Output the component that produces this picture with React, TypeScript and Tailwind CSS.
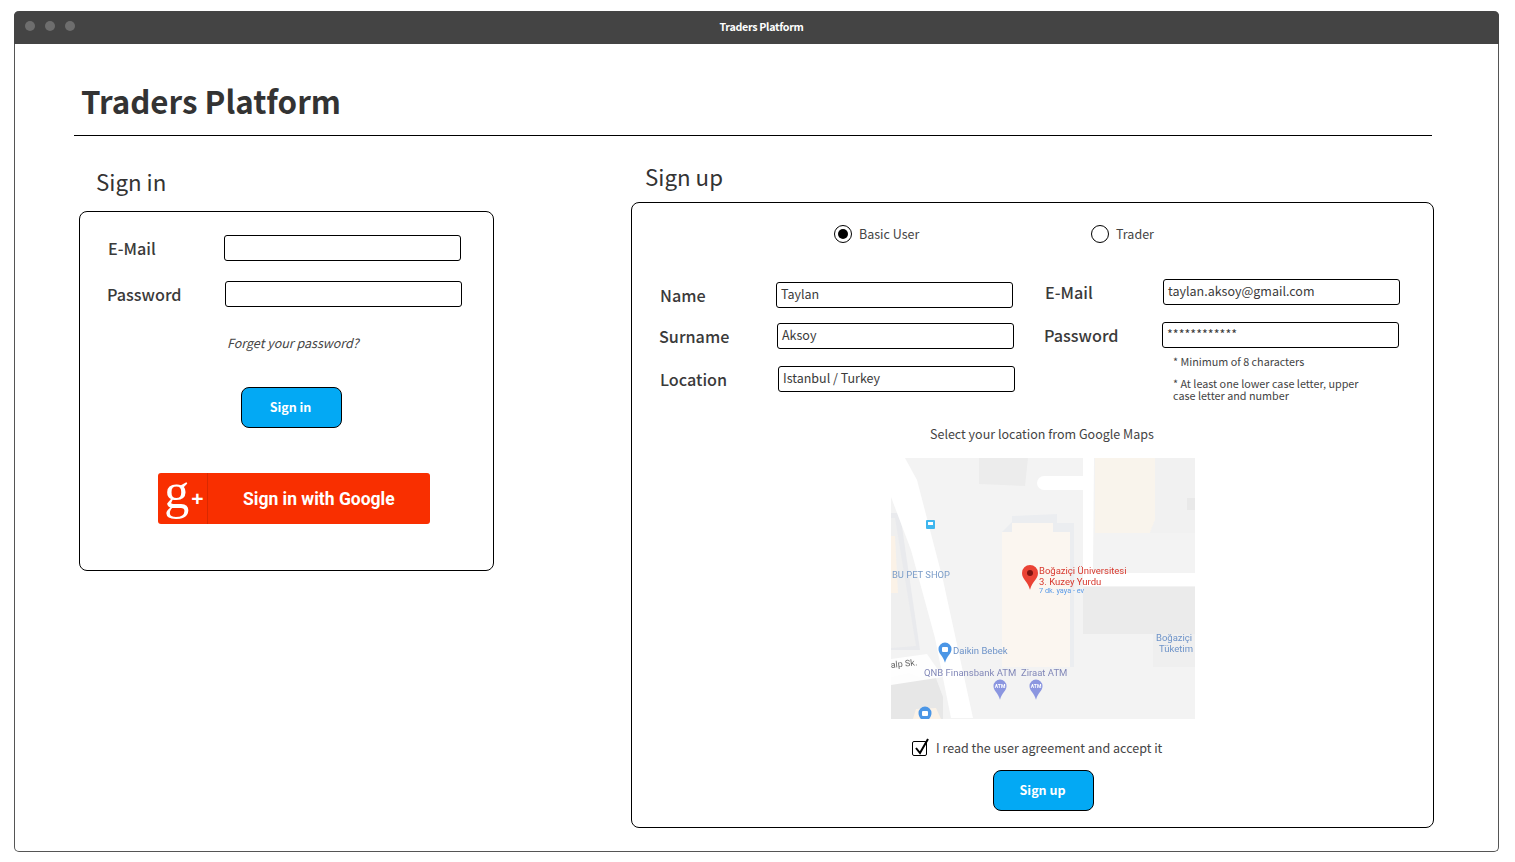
import React from "react";

function Field({ value }: { value?: string }) {
  return (
    <div className="h-[26px] w-[237px] shrink-0 rounded-[3px] border border-black bg-white pl-1 text-[12.5px] leading-[22px] text-[#3a3a3a]">
      {value}
    </div>
  );
}

function Label({ text, w }: { text: string; w: string }) {
  return <span className={`h-[26px] text-[16.2px] font-medium leading-[26px] text-[#3a3a3a] ${w}`}>{text}</span>;
}

function Radio({ on }: { on?: boolean }) {
  return (
    <span className="flex h-[18px] w-[18px] shrink-0 items-center justify-center rounded-full border border-black bg-white">
      {on && <span className="h-[10px] w-[10px] rounded-full bg-black" />}
    </span>
  );
}

function Pin({ x, y, fill, r = 6 }: { x: number; y: number; fill: string; r?: number }) {
  return (
    <path
      d={`M${x - r} ${y}a${r} ${r} 0 1 1 ${2 * r} 0c0 ${r * 0.8}-${r * 0.7} ${r}-${r} ${r * 2.1}c-${r * 0.3}-${r * 1.1}-${r}-${r * 1.3}-${r}-${r * 2.1}z`}
      fill={fill}
    />
  );
}

function MapPicture() {
  return (
    <svg width="304" height="261" viewBox="0 0 304 261" className="ml-[259px] mt-[14px] block shrink-0 blur-[0.35px]" style={{ fontFamily: "Roboto, sans-serif" }}>
      <rect width="304" height="261" fill="#f3f3f3" />
      <path d="M88 0h49l-3 28-46-2z" fill="#ececec" />
      <path d="M204 0h60v62l-5 13h-55z" fill="#f9f4ec" />
      <path d="M264 0h40v75h-45l5-13z" fill="#f1f1f1" />
      <rect x="296" y="40" width="8" height="12" fill="#e9e9e9" />
      <path d="M0 55l9 0 20 137H0z" fill="#e9eaed" />
      <path d="M0 60h4l21 128-25 2z" fill="#efefef" />
      <path d="M0 78h4l3 57H0z" fill="#fbf2e7" />
      <path d="M111 74l10-10v-6l45-2v9h17v144h-4V74z" fill="#ebedf0" />
      <path d="M111 74h10V65h41v9h17v135h-68z" fill="#fbf6f0" />
      <path d="M192 129h112v47h-112z" fill="#ebebeb" />
      <path d="M262 176h42v33h-42z" fill="#efefef" />
      <path d="M0 219l18-4 10 4 15-4 9 24v22H0z" fill="#e7e7e7" />
      <path d="M22 261l3-10 20-1 5 11z" fill="#fbf2e7" />
      <path d="M0 0h14l12 22 26 100 30 138H60L44 180 20 92 0 39z" fill="#fff" />
      <path d="M0 201l36-5 16 23-52 8z" fill="#fff" opacity="0.9" />
      <path d="M192 0h11l-1 115h102v13H192z" fill="#fff" />
      <path d="M153 18h40v14h-40a7 7 0 0 1 0-14z" fill="#fff" />
      <rect x="35" y="62" width="9" height="9" rx="1" fill="#3fb6ee" />
      <rect x="37" y="64" width="5" height="3" fill="#fff" />
      <Pin x={54} y={191} r={6.5} fill="#4b96e6" />
      <rect x="51" y="189" width="6" height="5" rx="1" fill="#fff" />
      <Pin x={34} y={255} r={6.5} fill="#4b96e6" />
      <rect x="31" y="253" width="6" height="5" rx="1" fill="#fff" />
      <Pin x={109} y={228} r={6.5} fill="#8b96e0" />
      <Pin x={145} y={228} r={6.5} fill="#8b96e0" />
      <text x="109" y="230" textAnchor="middle" fontSize="5" fontWeight="700" fill="#fff">ATM</text>
      <text x="145" y="230" textAnchor="middle" fontSize="5" fontWeight="700" fill="#fff">ATM</text>
      <Pin x={139} y={115} r={8} fill="#ea4335" />
      <circle cx="139" cy="115" r="3" fill="#7e1410" />
      <text x="148" y="116" fontSize="9.5" fill="#d8392e">Boğaziçi Üniversitesi</text>
      <text x="148" y="127" fontSize="9.5" fill="#d8392e">3. Kuzey Yurdu</text>
      <text x="148" y="135" fontSize="7.3" fill="#5a9be8">7 dk. yaya - ev</text>
      <text x="1" y="120" fontSize="9.4" fill="#7a9cc8">BU PET SHOP</text>
      <text x="62" y="196" fontSize="9.5" fill="#6d93c9">Daikin Bebek</text>
      <text x="0" y="210" fontSize="9" fill="#666" transform="rotate(-6 0 210)">alp Sk.</text>
      <text x="33" y="218" fontSize="9.5" fill="#8288b8">QNB Finansbank ATM</text>
      <text x="130" y="218" fontSize="9.5" fill="#8288b8">Ziraat ATM</text>
      <text x="265" y="183" fontSize="9.5" fill="#6d93c9">Boğaziçi</text>
      <text x="268" y="194" fontSize="9.5" fill="#6d93c9">Tüketim</text>
    </svg>
  );
}

export default function App() {
  return (
    <div className="h-[862px] w-[1515px] overflow-hidden bg-white pl-[14px] pt-[11px] font-['Noto_Sans_CJK_SC',sans-serif] text-[#333]">
      <div className="h-[841px] w-[1485px] rounded-[5px] border border-[#555] border-t-0">
        <div className="relative -mx-px flex h-[33px] items-center justify-center rounded-t-[5px] bg-[#444]">
          <div className="absolute left-[11px] top-[10px] flex gap-[10px]">
            <span className="h-[10px] w-[10px] rounded-full bg-[#6e6e6e]" />
            <span className="h-[10px] w-[10px] rounded-full bg-[#6e6e6e]" />
            <span className="h-[10px] w-[10px] rounded-full bg-[#6e6e6e]" />
          </div>
          <span className="-mt-px ml-[10px] text-[10.7px] font-bold tracking-[-0.3px] text-white">Traders Platform</span>
        </div>

        <h1 className="ml-[66px] mt-[37px] h-[41px] text-[31.3px] font-semibold leading-[40px] text-[#333]">Traders Platform</h1>
        <div className="ml-[59px] mt-[13px] h-px w-[1358px] bg-black" />

        <div className="flex items-start">
          <div className="ml-[64px] w-[415px] shrink-0">
            <h2 className="ml-[17px] mt-[31px] h-8 text-[22.3px] leading-[28px]">Sign in</h2>
            <div className="mt-3 h-[360px] rounded-[8px] border border-black">
              <div className="ml-[28px] mt-[23px] flex">
                <Label text="E-Mail" w="w-[116px]" />
                <Field />
              </div>
              <div className="ml-[27px] mt-5 flex">
                <Label text="Password" w="w-[118px]" />
                <Field />
              </div>
              <p className="ml-[147px] mt-[26px] h-5 text-[12.5px] italic leading-5 text-[#444]">Forget your password?</p>
              <button className="ml-[161px] mt-[34px] block h-[41px] w-[101px] rounded-[8px] border border-black bg-[#03a9f4] pr-[2px] text-[12.5px] font-bold text-white">Sign in</button>
              <div className="ml-[78px] mt-[45px] flex h-[51px] w-[272px] items-stretch rounded-[3px] bg-[#f92f00] text-white">
                <div className="flex w-[50px] items-center justify-center gap-[2px] border-r border-[#d92900] pl-[3px] font-['Liberation_Serif',serif]">
                  <span className="-mt-[16px] text-[50px] leading-none">g</span>
                  <span className="font-['Liberation_Sans',sans-serif] text-[21px] font-bold leading-none">+</span>
                </div>
                <span className="ml-[35px] mt-[2px] self-center font-['Roboto',sans-serif] text-[17.5px] font-bold">Sign in with Google</span>
              </div>
            </div>
          </div>

          <div className="ml-[137px] w-[803px] shrink-0">
            <h2 className="ml-[14px] mt-[26px] h-8 text-[22.3px] leading-[28px]">Sign up</h2>
            <div className="mt-2 flex h-[626px] flex-col items-start rounded-[8px] border border-black">
              <div className="ml-[202px] mt-[22px] flex h-[18px] items-center text-[12.5px] text-[#444]">
                <div className="flex w-[257px] items-center gap-[7px]"><Radio on /><span>Basic User</span></div>
                <div className="flex items-center gap-[7px]"><Radio /><span>Trader</span></div>
              </div>

              <div className="ml-[27px] mt-[36px] flex h-[145px]">
                <div className="w-[385px]">
                  <div className="ml-px mt-[3px] flex">
                    <Label text="Name" w="w-[116px]" />
                    <Field value="Taylan" />
                  </div>
                  <div className="mt-[15px] flex">
                    <Label text="Surname" w="w-[118px]" />
                    <Field value="Aksoy" />
                  </div>
                  <div className="ml-px mt-[17px] flex">
                    <Label text="Location" w="w-[118px]" />
                    <Field value="Istanbul / Turkey" />
                  </div>
                </div>
                <div>
                  <div className="ml-px flex">
                    <Label text="E-Mail" w="w-[118px]" />
                    <Field value="taylan.aksoy@gmail.com" />
                  </div>
                  <div className="mt-[17px] flex">
                    <Label text="Password" w="w-[118px]" />
                    <Field value="************" />
                  </div>
                  <div className="ml-[129px] mt-[7px] w-[190px] text-[10.8px] leading-3 text-[#444]">
                    <p>* Minimum of 8 characters</p>
                    <p className="mt-[10px]">* At least one lower case letter, upper case letter and number</p>
                  </div>
                </div>
              </div>

              <p className="ml-[298px] h-5 text-[12.5px] leading-5 text-[#444]">Select your location from Google Maps</p>
              <MapPicture />

              <div className="ml-[280px] mt-[21px] flex h-4 items-center gap-[9px] text-[12.5px] text-[#444]">
                <span className="relative h-[15px] w-[15px] shrink-0 rounded-[2px] border border-black">
                  <svg className="absolute -top-[5px] left-0" width="18" height="20" viewBox="0 0 18 20">
                    <path d="M3 11l4 5 8-14" fill="none" stroke="#000" strokeWidth="2" />
                  </svg>
                </span>
                <span>I read the user agreement and accept it</span>
              </div>
              <button className="ml-[361px] mt-[14px] block h-[41px] w-[101px] rounded-[8px] border border-black bg-[#03a9f4] pr-[2px] text-[12.5px] font-bold text-white">Sign up</button>
            </div>
          </div>
        </div>
      </div>
    </div>
  );
}
